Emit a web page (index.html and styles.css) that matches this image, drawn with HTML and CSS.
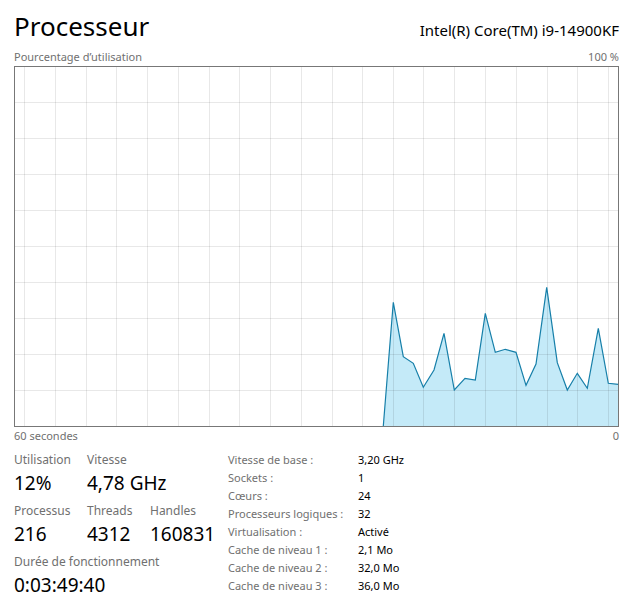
FILE: index.html
```html
<!DOCTYPE html>
<html>
<head>
  <meta charset="utf-8">
  <title>Processeur</title>
  <link rel="stylesheet" href="styles.css">
</head>
<body>
  <div class="page">
    <!-- Title and CPU model -->
    <div class="header">
      <h1 class="title">Processeur</h1>
      <div class="model">Intel(R) Core(TM) i9-14900KF</div>
    </div>

    <div class="axis-row">
      <span>Pourcentage d’utilisation</span>
      <span>100 %</span>
    </div>

    <!-- Usage graph -->
    <svg class="graph" width="605" height="361" viewBox="14 66 605 361">
      <rect x="14" y="66" width="605" height="361" fill="#fff"/>
      <path class="fill" d="M383.3,426 L393.3,302.3 403.3,356.7 413.3,363.3 423.3,387.3 434,370 444,333.3 454.3,390 465,378.3 475.3,380 485.3,313.3 495.3,352.3 505.3,349.3 516,352.3 526,385.3 536,364 546.7,287.3 557.3,362.7 567.3,390 577.3,373.3 587.3,388.3 598.3,328.3 608.3,383.3 618.3,384.3 618.3,426 Z"/>
      <g class="grid">
        <rect x="24" y="67" width="1" height="359"/>
        <rect x="55" y="67" width="1" height="359"/>
        <rect x="86" y="67" width="1" height="359"/>
        <rect x="116" y="67" width="1" height="359"/>
        <rect x="147" y="67" width="1" height="359"/>
        <rect x="178" y="67" width="1" height="359"/>
        <rect x="209" y="67" width="1" height="359"/>
        <rect x="239" y="67" width="1" height="359"/>
        <rect x="270" y="67" width="1" height="359"/>
        <rect x="301" y="67" width="1" height="359"/>
        <rect x="332" y="67" width="1" height="359"/>
        <rect x="362" y="67" width="1" height="359"/>
        <rect x="393" y="67" width="1" height="359"/>
        <rect x="423" y="67" width="1" height="359"/>
        <rect x="454" y="67" width="1" height="359"/>
        <rect x="485" y="67" width="1" height="359"/>
        <rect x="516" y="67" width="1" height="359"/>
        <rect x="547" y="67" width="1" height="359"/>
        <rect x="577" y="67" width="1" height="359"/>
        <rect x="608" y="67" width="1" height="359"/>
        <rect x="15" y="102" width="603" height="1"/>
        <rect x="15" y="138" width="603" height="1"/>
        <rect x="15" y="174" width="603" height="1"/>
        <rect x="15" y="210" width="603" height="1"/>
        <rect x="15" y="246" width="603" height="1"/>
        <rect x="15" y="282" width="603" height="1"/>
        <rect x="15" y="318" width="603" height="1"/>
        <rect x="15" y="354" width="603" height="1"/>
        <rect x="15" y="390" width="603" height="1"/>
      </g>
      <polyline class="line" points="383.3,426 393.3,302.3 403.3,356.7 413.3,363.3 423.3,387.3 434,370 444,333.3 454.3,390 465,378.3 475.3,380 485.3,313.3 495.3,352.3 505.3,349.3 516,352.3 526,385.3 536,364 546.7,287.3 557.3,362.7 567.3,390 577.3,373.3 587.3,388.3 598.3,328.3 608.3,383.3 618.3,384.3"/>
      <rect class="frame" x="14.5" y="66.5" width="604" height="360"/>
    </svg>

    <div class="axis-row">
      <span>60 secondes</span>
      <span>0</span>
    </div>

    <!-- Live stats and static info -->
    <div class="details">
      <div class="stats">
        <div class="stat">
          <div class="stat-label">Utilisation</div>
          <div class="stat-value">12%</div>
        </div>
        <div class="stat span2">
          <div class="stat-label">Vitesse</div>
          <div class="stat-value">4,78 GHz</div>
        </div>
        <div class="stat">
          <div class="stat-label">Processus</div>
          <div class="stat-value">216</div>
        </div>
        <div class="stat">
          <div class="stat-label">Threads</div>
          <div class="stat-value">4312</div>
        </div>
        <div class="stat">
          <div class="stat-label">Handles</div>
          <div class="stat-value">160831</div>
        </div>
        <div class="stat span3">
          <div class="stat-label">Durée de fonctionnement</div>
          <div class="stat-value">0:03:49:40</div>
        </div>
      </div>

      <div class="info">
        <span class="info-label">Vitesse de base :</span><span>3,20 GHz</span>
        <span class="info-label">Sockets :</span><span>1</span>
        <span class="info-label">Cœurs :</span><span>24</span>
        <span class="info-label">Processeurs logiques :</span><span>32</span>
        <span class="info-label">Virtualisation :</span><span>Activé</span>
        <span class="info-label">Cache de niveau 1 :</span><span>2,1 Mo</span>
        <span class="info-label">Cache de niveau 2 :</span><span>32,0 Mo</span>
        <span class="info-label">Cache de niveau 3 :</span><span>36,0 Mo</span>
      </div>
    </div>
  </div>
</body>
</html>
```

FILE: styles.css
```css
body {
  margin: 0;
  background: #fff;
  font-family: "Noto Sans", "Open Sans", sans-serif;
  color: #000;
  overflow: hidden;
}

.page {
  width: 605px;
  padding: 8px 6px 0 14px;
}

/* Header */
.header {
  display: flex;
  justify-content: space-between;
  align-items: baseline;
  height: 36px;
}

.title {
  margin: 0;
  font-size: 26px;
  font-weight: 400;
  line-height: 36px;
}

.model {
  font-size: 15px;
  line-height: 20px;
}

.axis-row {
  display: flex;
  justify-content: space-between;
  font-size: 11px;
  line-height: 16px;
  color: #707070;
}

.header + .axis-row {
  margin-top: 5px;
}

/* Graph */
.graph {
  display: block;
  margin-top: 1px;
}

.graph .fill {
  fill: #c4eaf8;
}

.graph .grid rect {
  fill: rgba(0, 0, 0, 0.09);
}

.graph .line {
  fill: none;
  stroke: #167fa9;
  stroke-width: 1.2;
}

.graph .frame {
  fill: none;
  stroke: #777;
  stroke-width: 1;
}

.graph + .axis-row {
  margin-top: 1px;
}

/* Bottom details */
.details {
  display: flex;
  margin-top: 8px;
}

.stats {
  width: 214px;
  display: grid;
  grid-template-columns: 73px 63px auto;
  row-gap: 9px;
}

.span2 {
  grid-column: span 2;
}

.span3 {
  grid-column: span 3;
}

.stat-label {
  font-size: 12px;
  line-height: 16px;
  color: #707070;
}

.stat-value {
  font-size: 19px;
  line-height: 22px;
  margin-top: 4px;
}

.info {
  display: grid;
  grid-template-columns: 130px auto;
  grid-auto-rows: 18px;
  font-size: 11px;
  line-height: 18px;
  margin-top: -1px;
}

.info-label {
  color: #707070;
}
```
